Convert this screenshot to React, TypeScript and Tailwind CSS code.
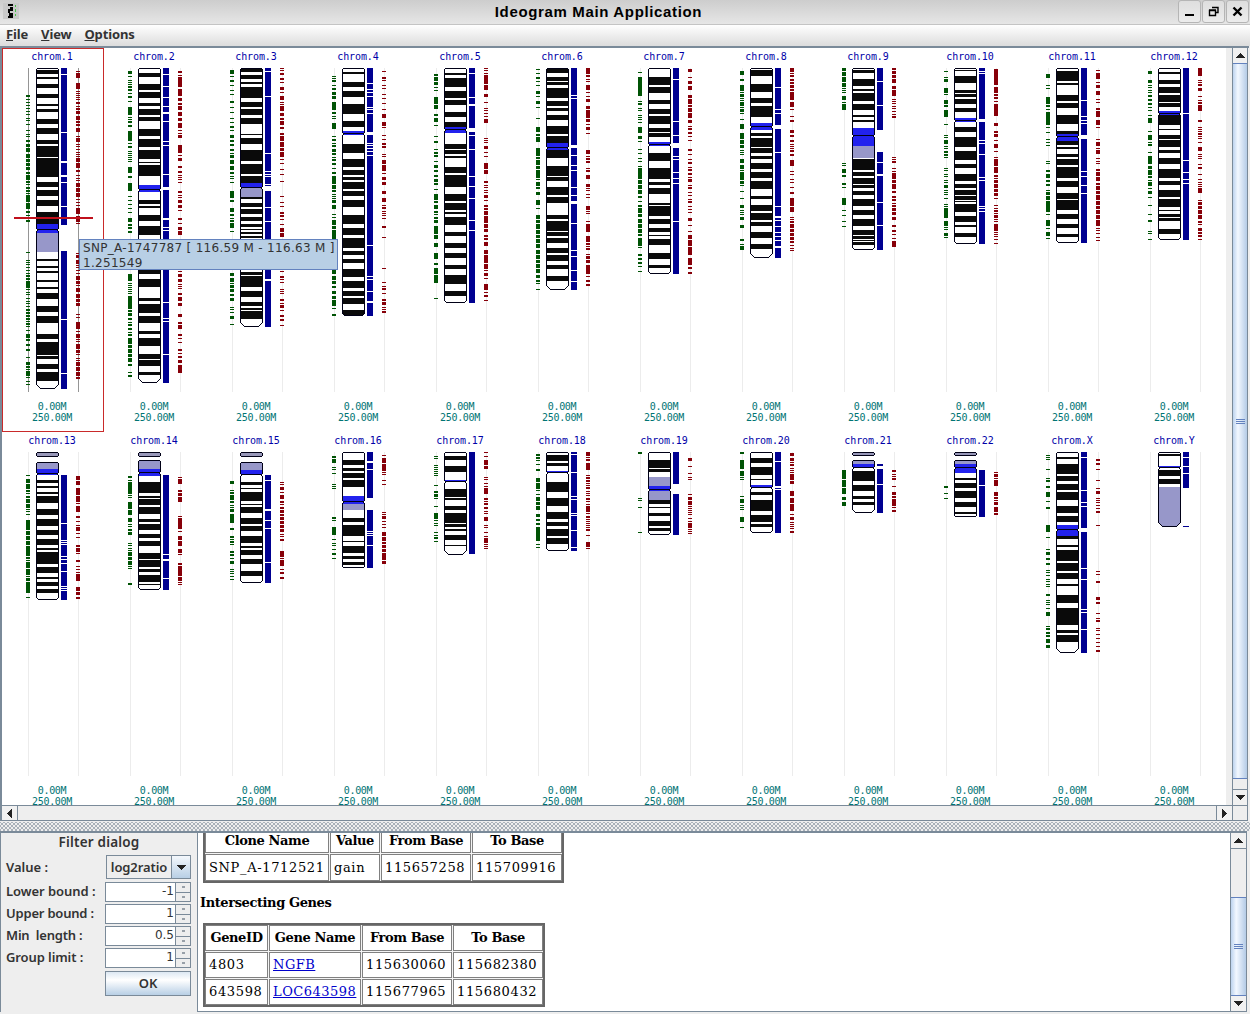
import React from "react";

type Shade = "grey" | "blue";
interface Chromosome {
  name: string;
  end: number;
  start?: number;
  cap?: number;
  waist?: number;
  round?: number;
  bands: string;
  shaded?: [Shade, number, number][];
  strip: string;
  green: string;
  red: string;
}

const chromosomes: Chromosome[] = [
  {
    name: "1", end: 321, waist: 161, round: 4,
    bands: "2-6 9-11 16-20 26-30 36-38 41-44 51-56 60-66 72-76 78-89 90-109 114-119 122-128 132-138 144-156 191-193 198-200 203-205 212-214 219-221 225-231 238-244 248-255 266-271 274-287 288-291 296-301 304-313",
    shaded: [["blue", 156, 165], ["grey", 165, 184]],
    strip: "0-6 7-64 65-93 95-107 109-114 115-138 139-157 183-251 252-305 306-321",
    green: "27-29 31 34 37 40 43 46 50 52 56 62 66 68 72-74 76-79 80-84 86-90 91-94 95-98 99-102 104-106 107-112 113-115 116 119-121 122-124 125 127-134 135-141 143-145 147 152-154 184 192 194 196 199 202 205 207-209 210-212 213-220 221 224 226 230 233 235 238 241-243 244-246 247-249 250-252 253 255-257 258 262 266-270 271-273 276-278 281-283 289 294-297 298-300 301 303-308 309 313 316",
    red: "3 5-10 15-21 23 25 27 29 31 34-36 38 40-42 43-46 48-52 53-55 56-58 60-64 68 70-74 76 78 81 84 86 88 90-94 95-100 102-104 107 110 112 115-119 120-124 125-129 131 134 137 140-146 148-154 155 185 187-190 192-196 197 199 202 205 208-212 213-216 217 220-224 226-230 231-234 235-238 246 249 254-261 263 266-270 271 273 276-281 282-285 286 290 292 294-298 299-303 304-308 309-311",
  },
  {
    name: "2", end: 315, waist: 121, round: 4,
    bands: "5-9 16-22 24-30 35-38 41-47 49-53 61-68 71-79 82-91 94-95 97-108 132-136 138-140 147-153 158-167 202-206 211-219 230-233 236-245 248-255 263-266 270-278 286-291 292-298 304-307",
    shaded: [["blue", 117, 124]],
    strip: "0-6 7-18 19-29 30-38 39-44 46-53 54-73 74-77 78-106 107-119 122-150 152-159 160-162 163-234 235-250 251-253 254-286 287-315",
    green: "3-6 8 12 14 16 18-20 21-23 25 28-30 33 39-47 49 51 53-55 57-59 63-73 75 78-80 83 85 87 89 91 93 99-105 108-110 115-123 128 132 136 140 144 150-154 156-158 159-161 163-165 206-213 215 217 219 221 223 225 228-241 242-244 245-248 250-252 254 256-258 260-262 264 266-268 270-276 277-280 281-285 286-289 290-294 296-298 304 307-309",
    red: "3-5 7 9-19 21-28 30-33 35-37 38-42 44-48 50-53 55-60 62 65 67-70 77-85 87 90-93 98-100 103-105 107 109 111 114 123-125 127 129 132-135 137-140 142 150-152 155 159-162 163-167 203 206-209 211-214 216 218 220 225-227 229-233 235-238 246-249 254-256 257-261 266-268 270 274 281-283 285 288-290 292-295 297-305",
  },
  {
    name: "3", end: 259, waist: 119, round: 4,
    bands: "0-4 7-11 14-16 19-30 34-39 41-47 50-56 66-67 70-76 82-93 96-106 108-115 129-131 135-139 141-146 149-153 156-159 161-162 164-166 168-170 204-207 208-219 223-229 234-238 240-242 243-251",
    shaded: [["blue", 115, 119], ["grey", 119, 129]],
    strip: "0-3 4-28 29-85 86-103 104-106 107-108 109-116 117-118 123-139 140-153 154-211 213-259",
    green: "2-6 8 12-14 17 22 26 33-35 39 44 50 54 58-60 62 67-70 72-74 76-78 81-83 85 87-90 92-96 98-102 104-106 108 110 114 123-130 132-134 140-144 146-148 150 152-154 155-160 163 205-208 210-214 215 217-220 221-224 226-228 230-233 239 241 244 248-251 256",
    red: "0 2 5-7 10-12 14 19-22 24 28-32 34 36 38-43 45-48 50-52 53-57 59-61 65-67 68-73 74-79 80-83 84-89 91 95 101 106 113 128 134 138 144-146 147-149 151 156 160-164 165-169 203 208-210 211 214 221 223 225 231-233 235 237-240 242 247-249 251-253 257",
  },
  {
    name: "4", end: 248, waist: 65, round: 2,
    bands: "4-6 14-19 23-29 36-46 53-59 76-85 91-99 102-107 109-112 114-121 123-128 132-139 147-156 160-167 170-180 183-187 191-195 201-209 213-220 223-228 230-236 242-248",
    shaded: [["blue", 63, 67]],
    strip: "0-15 16-21 22-24 25-28 29-39 40-41 42-45 46-64 67-75 76-77 78-80 81-83 84-87 88-177 178-208 209-211 212-223 224-233 235-248",
    green: "8 10 12-14 17 20-22 24-27 28-31 34-42 44-46 48 50 55-61 68 71-73 75 77-79 81-84 85-87 89 91-93 95-97 100 104-106 108-116 117-121 122-124 126 128 130 132-135 137-141 146 149 152-157 158-161 162-171 202-206 208-212 213-216 218-220 223-226 228-231 232-238 240 246-248",
    red: "3 9-11 12 17 20 26 30 35 41 46-50 54-58 59 67 71 75-77 78-80 86 88 92-96 97-103 105 109-112 114-117 123-126 130-134 137 139-141 143 145 147 150 158-160 169 200 214 218 220-222 225 231-233 234-237 239 241 243-245",
  },
  {
    name: "5", end: 235, waist: 61, round: 2,
    bands: "5-7 10-19 23-30 32-37 44-49 54-59 76-81 82-86 88-90 99-105 107-119 126-133 135-142 144-146 149-157 164-168 175-180 185-190 197-201 207-216 223-228",
    shaded: [["blue", 59, 65]],
    strip: "0-5 6-29 30-36 38-60 64-67 68-81 82-108 109-118 119-130 131-152 153-162 163-235",
    green: "6-8 9-13 14-17 19 22 29-36 37-41 46-48 50-54 57 68 73-75 81 84-86 87-89 93 97-100 102-104 107-109 111-114 115-117 121 126-132 133-135 137-141 143-145 146 149-151 152-155 158-166 167-171 175-179 185-191 195-197 200-206 207-215 230",
    red: "0 2 5 7-16 17-22 26-29 34 40 42 45 48 51-55 70 72 74 78-81 84 88 95-101 102-106 113-115 117 119 122 124 127-130 132 137-139 140-142 143-147 148-155 156-160 161-164 167-169 170-172 174-178 182-186 187-195 196-201 202 205-208 210 216-222 224 227-229 232",
  },
  {
    name: "6", end: 222, waist: 79, round: 4,
    bands: "1-5 9-13 14-17 20-30 33-38 40-43 47-52 58-66 68-75 82-90 98-108 109-113 119-127 129-135 147-151 153-163 164-168 170-175 180-185 187-193 197-201 208-213",
    shaded: [["blue", 75, 82]],
    strip: "0-27 28-30 31-77 80-87 88-97 98-102 103-119 120-127 128-133 136-155 156-182 183-188 189-202 203-213 214-222",
    green: "1 5 9-11 13 17 23-26 28 33-36 39 50 59-64 66-68 69-74 80-88 89-91 92-97 98-101 102-110 111 114-118 119-121 124-127 132-137 140 147-151 152-155 156-161 162-166 167-170 171-175 176-180 182-186 187-191 192-195 196-200 201-205 207-210 212-214 215 221",
    red: "0-6 7-9 11 13 17-22 24 28 31-34 38-41 42-50 51-54 56 59-62 65 82-86 88 90-92 93-95 100 102-104 107-111 116-119 120 122 126 129 138-142 143 145 153 156-164 168-174 175-177 178 180-182 186 188-191 192-195 197 198-206 208 212-214 216-218",
  },
  {
    name: "7", end: 206, waist: 76, round: 2,
    bands: "9-17 19-25 32-36 41-46 48-56 60-64 65-69 85-93 100-111 114-117 120-126 135-137 138-148 151-156 160-164 167-168 171-177 185-191 197-200",
    shaded: [["blue", 74, 78]],
    strip: "0-11 12-53 54-67 68-75 80-88 89-91 92-104 105-110 111-115 116-153 154-206",
    green: "4 9-28 33 35-37 40 42 47 49 51 54 59-65 68-71 73 81 85 90 93 98 100-111 112-116 117-121 122-126 128-130 133 137-139 140-145 146-149 151-155 156-160 161-165 166-168 170-178 179 186-188 190-192 194-196 198 203",
    red: "1-4 9 13-16 18-22 27-30 31-36 37-39 40-44 45-50 52-55 58 60-62 64-66 68 72 81-83 86 91 94-96 99 101-103 105-107 109 111-114 117 119-121 124 127 131 133-135 138 141 144 150-153 157 163 167-171 172-178 179-187 190-197 199-201 204-206",
  },
  {
    name: "8", end: 190, waist: 58, round: 4,
    bands: "2-8 16-24 30-35 38-49 65-68 70-79 80-85 88-91 95-101 104-110 113-121 128-131 137-143 145-152 154-158 164-170 176-181",
    shaded: [["blue", 55, 62]],
    strip: "0-19 20-41 42-45 46-57 61-84 85-138 139-148 150-152 153-158 159-164 165-168 169-172 173-178 180-190",
    green: "3-7 11-13 17-23 24 26-28 28 30 32 34-38 39 41-44 45 51 56-61 65-71 72-76 77-80 82 84 86 91-95 97-101 102 104-112 113-116 117 123 130 137-140 142 144 146 149-152 157-160 171-173 176 178-182",
    red: "0-4 5 7-9 11-13 14-16 17-20 21-23 24-32 34-39 41 48 52-54 62-65 67-69 72-74 76 78 80 82-84 86-88 92-98 103 106 111 114 119 124-126 130-138 139-144 149 151 153-155 156-160 161-164 165-168 169-172 173-175 177 180 182",
  },
  {
    name: "9", end: 182, waist: 67, round: 2,
    bands: "2-5 11-18 21-23 25-33 36-42 47-49 52-54 91-102 104-108 110-116 117-120 123-127 131-138 142-147 151-158 162-167 168-171 172-173 174-177",
    shaded: [["blue", 60, 78], ["grey", 78, 90]],
    strip: "0-13 14-37 38-62 84-94 95-106 108-134 135-157 158-182",
    green: "0-3 4-8 9-14 15-19 20 22 24 28-32 34 36-42 95 97 101-105 107-109 115-117 119 130-137 142 147 153 158",
    red: "0-2 3-6 7-10 11-15 18-21 22-28 31 33 35 38 40 43 46 48-50 89 91 93-95 100 103 105-111 112-115 116-121 123-125 128-130 131-133 135 137-139 140-143 144-147 149-152 157-159 162-164 166 170 173-179",
  },
  {
    name: "10", end: 176, waist: 52, round: 2,
    bands: "2-3 8-15 22-25 26-29 31-36 40-44 59-64 69-79 83-92 96-100 106-113 116-120 122-127 128-132 133-134 136-144 148-154 157-159 165-169",
    shaded: [["blue", 50, 54]],
    strip: "0-3 4-5 6-51 54-72 73-75 76-86 87-109 110-112 113-138 139-140 141-143 144-176",
    green: "3 9 11-14 20-25 26 32-36 37-39 42-49 56 67 69 72-76 78 80 83-85 86-88 89 100 102 106 108 112 114 117-120 122 124 126 130 136 138 140-150 153-158 159 161 165-168 169",
    red: "1-17 19-25 26-28 29-31 33 36-48 55-58 63-65 66-69 72 76-80 83 89 91-98 99-105 107-109 110 112-115 116-120 121-124 125-128 130 137 140 142-144 145 147-150 151 153 156-163 164 166 168 171 175",
  },
  {
    name: "11", end: 175, waist: 68, round: 2,
    bands: "3-13 15-17 27-33 35-40 47-56 63-66 73-77 79-81 86-89 91-97 99-110 113-119 125-131 132-142 146-151 156-160 166-169",
    shaded: [["blue", 66, 73]],
    strip: "0-32 33-48 49-52 53-55 56-67 71-103 104-108 109-117 118-125 126-175",
    green: "6-10 17 20 29-36 37-39 41 44-57 59 64 71 74 77 93 95 102-104 106-110 112-114 116-118 122 124-127 128-132 133-135 135-144 146 152-158 160 164-168 170",
    red: "2 5-11 14 17-20 23-27 31 34 40-42 43-49 52-57 59 71 74-78 80 82-86 90 93 95 101-103 104-108 109-113 115-117 118-122 123-126 127-132 133-137 138-141 142-146 147-151 152-158 160 162 165 169 172",
  },
  {
    name: "12", end: 172, waist: 45, round: 2,
    bands: "4-6 12-16 19-25 27-34 35-39 47-57 61-62 67-71 72-79 82-85 90-96 101-110 113-117 122-129 131-139 142-143 146-149 150-153 161-166",
    shaded: [["blue", 43, 47]],
    strip: "0-45 46-92 93-104 105-111 112-115 116-172",
    green: "3-6 12-15 17 19 22 24 27-29 31-33 35-37 39 42 47 50-55 63 67 68-72 74 76-78 84 88-96 98-101 102-107 108-110 112 114-118 120 123-126 129 137 146 152-154 163 165 171",
    red: "0-8 12 14 16-18 20-23 28 32 34-36 37-43 52-54 59 61 63 65-67 68 70 74 79-83 86 88 90 96 99-101 106 111 114 116 118 120-125 132 134-137 138-141 142-146 147-151 153-155 156 160-163 164-166 167-169 171",
  },
  {
    name: "13", start: 10, cap: 5, end: 148, waist: 21, round: 2,
    bands: "28-31 34-36 40-42 44-51 57-63 67-74 78-83 87-93 96-98 100-112 115-121 125-127 130-134 137-141",
    shaded: [["grey", 10, 17], ["blue", 17, 23]],
    strip: "23-71 72-88 89-90 91-92 93-104 105-107 108-111 112-119 120-134 135-136 137-138 139-148",
    green: "23 27-31 32-37 38-40 41 44-46 47-51 52-56 57 59 62 68-78 79-83 84-88 89-93 94-104 105-107 108 110-116 117-123 124 126 127-129 130-141 145",
    red: "24-28 29-33 36-43 44-50 51 54-60 64-66 69 73 75-79 81 85 93-95 96-100 101 108-110 114 117 120 122-129 135-139 140-143 145-147",
  },
  {
    name: "14", start: 8, cap: 5, end: 138, waist: 20, round: 2,
    bands: "30-41 44-46 47-53 55-62 67-70 72-78 82-86 89-94 101-107 108-115 117-120 123-130 132-133",
    shaded: [["grey", 8, 17], ["blue", 17, 24]],
    strip: "23-102 103-107 109-126 127-138",
    green: "24-26 28 30-42 43 45 50-57 58-63 66-70 72 74 77-79 80-83 91 93 96 98 100-104 105-108 109-113 114 116 131-133",
    red: "25 27-32 38-40 41-44 45-50 64 66-77 79 84-88 89-94 97-101 102 111-113 114-124 125-129 130 132",
  },
  {
    name: "15", start: 10, cap: 5, end: 131, waist: 22, round: 2,
    bands: "30-33 36-37 40-49 52-53 55-61 66-72 74-79 84-91 94-96 98-103 107-112 119-124",
    shaded: [["grey", 10, 18], ["blue", 18, 22]],
    strip: "23-28 29-57 59-68 69-76 77-110 111-131",
    green: "29-32 38 40-42 43-48 49-51 53 55 57-60 62-71 76-78 84-86 87 89-91 92 99-101 102-104 106 109-112 117 119 121 124 127",
    red: "30 32 35-38 40 43-47 49-51 52 55-57 58-61 62-64 65-68 69-72 73-76 77-80 82 84 87-89 99-105 106 108-114 117 120-122 125-127",
  },
  {
    name: "16", end: 116, waist: 49, round: 1,
    bands: "8-13 16-19 21-26 28-35 66-70 73-84 89-90 94-101 104-107 110-113",
    shaded: [["blue", 44, 52], ["grey", 52, 58]],
    strip: "0-9 11-17 18-46 58-79 80-81 82-83 84-93 94-116",
    green: "4-6 7-11 15 17 21 32 34 36 65-67 68 75-83 87 91 93 97 101-103 106",
    red: "3 6-11 12-19 20 22 28 32 60 62 64-67 69 72 75 80-84 85-89 90-92 93-96 97-100 101-108 109-112",
  },
  {
    name: "17", end: 103, waist: 29, round: 4,
    bands: "4-8 14-20 37-45 46-48 54-58 61-71 72-75 77-79 83-88 93-94",
    shaded: [["blue", 28, 30]],
    strip: "0-102",
    green: "4 6 13 15 17 19 21 23 33 39-41 42-45 46 54 61-67 68 71 73 80 83 85-87 89",
    red: "0 4 8-13 14-17 25 27 31 34 36-42 46-48 49 51-53 55-57 59 61 65-69 73 75 80 84 86-91 92 94 96",
  },
  {
    name: "18", end: 99, waist: 20, round: 2,
    bands: "3-9 11-14 30-40 46-54 60-67 70-74 77-84 86-92",
    shaded: [["blue", 19, 21]],
    strip: "0-2 3-20 21-44 45-47 48-61 62-63 64-78 79-95 96-99",
    green: "2-4 5-7 8 12 17-19 26-30 31-37 38 42 45-49 50-53 54-58 62-65 67-69 71-73 75-89 92 95",
    red: "0-4 5 7-9 11-18 23 25-27 28-30 31 33 35-37 39 41 43 46-48 49 52 54-60 61 64-66 67 69 71 73 75 77-79 83 90-95 96",
  },
  {
    name: "19", end: 83, waist: 37, round: 2,
    bands: "8-16 17-20 48-52 55-56 61-64 69-74 76-79",
    shaded: [["grey", 25, 34], ["blue", 34, 39], ["grey", 39, 48]],
    strip: "0-32 42-83",
    green: "0-2 46 48 55 80",
    red: "6-9 14 21 25 27 42 45-48 49-53 54 56 58 60 62 66 69 71-76 77 79 81",
  },
  {
    name: "20", end: 81, waist: 35, round: 2,
    bands: "6-11 15-23 27-28 40-43 48-59 63-70 72-75",
    shaded: [["blue", 33, 35]],
    strip: "0-9 10-34 36-37 38-81",
    green: "0-2 8-17 19-24 25 27 44 47-51 53 55 57 65-70 75",
    red: "1-4 6-9 10 12-14 16 18 20 22-28 29-32 39-44 46-51 52-59 62 65-68 70 72 74 76 79-81",
  },
  {
    name: "21", start: 8, cap: 4, end: 61, waist: 15, round: 3,
    bands: "19-29 33-39 44-47 50-53",
    shaded: [["grey", 8, 12], ["blue", 12, 16]],
    strip: "12-14 17-32 33-61",
    green: "18-27 28-35 36-42 45-48 50-54",
    red: "18-20 22 24 26-28 34 40-43 44-46 47-54 55 58-60",
  },
  {
    name: "22", start: 8, cap: 4, end: 65, waist: 15, round: 1,
    bands: "26-28 31-36 39-46 50-55 60-62",
    shaded: [["grey", 8, 12], ["blue", 12, 21]],
    strip: "18-33 34-65",
    green: "34-36 41 46",
    red: "20 22-25 26 28-34 40-44 45-47 48 50-53 55-60 61-63",
  },
  {
    name: "X", end: 201, waist: 77, round: 4,
    bands: "5-7 12-22 24-29 32-38 40-48 54-61 64-70 84-87 93-95 98-109 111-119 121-127 132-134 143-151 156-173 178-181 183-190",
    shaded: [["blue", 73, 84]],
    strip: "0-5 6-38 39-50 51-54 55-76 80-116 117-127 128-157 158-160 161-177 178-201",
    green: "3 5 7 17 26 28-30 34-36 40-45 49 55-57 73-80 85 97 100-103 106-108 111-113 118 120 123 127 129 132 134 142-144 148 150 152 156 160-164 174 176-178 180-182 183-185 187-191 193-196",
    red: "7-9 11-13 17 28 36 39-42 46 48 50 53 56 59-61 73 119 122 129-131 145-148 150-152 161 166 168-170 176 178 182 186 190 194 198-200",
  },
  {
    name: "Y", end: 75, waist: 15, round: 4,
    bands: "2-4 18-24 27-32",
    shaded: [["blue", 14, 15], ["grey", 35, 75]],
    strip: "0-5 6-14 15-21 22-36 74-75",
    green: "",
    red: "",
  },
];

const parse = (s: string): [number, number][] =>
  s
    .split(" ")
    .filter(Boolean)
    .map((part) => {
      const [a, b] = part.split("-").map(Number);
      return [a, b ?? a + 1];
    });

const bars = (s: string, x: number, width: number) =>
  parse(s)
    .map(([a, b]) => `M${x} ${a}h${width}v${b - a}h${-width}z`)
    .join("");

/** Outline of one arm with chamfered corners. */
const arm = (y0: number, y1: number, top: number, bottom: number) =>
  `M${34.5 + top} ${y0}H${56.5 - top}L56.5 ${y0 + top}V${y1 - bottom}L${56.5 - bottom} ${y1}H${34.5 + bottom}L34.5 ${y1 - bottom}V${y0 + top}Z`;

function Ideogram({ c, selected }: { c: Chromosome; selected: boolean }) {
  const top = (c.start ?? 0) + 0.5;
  const end = c.end - 0.5;
  const round = c.round ?? 2;
  const outline = c.waist
    ? arm(top, c.waist + 0.5, 1, 1) + arm(c.waist + 0.5, end, 2, round)
    : arm(top, end, 1, round);
  const clip = `arms-${c.name}`;
  return (
    <svg className="block shrink-0" width="100" height="326" viewBox="0 0 100 326" shapeRendering="crispEdges">
      <path d="M26.5 0V324M76.5 0V324" stroke={selected ? "#959595" : "#ececec"} />
      <path d={bars(c.green, 24, 4)} fill="#005305" />
      <path d={bars(c.red, 74, 4)} fill="#870009" />
      <path d={bars(c.strip, 59, 6)} fill="#000091" />
      <clipPath id={clip}>
        <path d={outline} />
      </clipPath>
      <path d={outline} fill="#fff" />
      <g clipPath={`url(#${clip})`}>
        <path d={bars(c.bands, 34, 23)} fill="#0a0a0a" />
        {c.shaded?.map(([shade, a, b]) => (
          <rect key={a} x="34" y={a} width="23" height={b - a} fill={shade === "blue" ? "#2222ee" : "#9797c9"} />
        ))}
      </g>
      <path d={outline} fill="none" stroke="#000016" />
      {c.cap && <path d={arm(0.5, c.cap - 0.5, 1, 1)} fill="#9797b8" stroke="#000016" />}
      {selected && <path d="M12 149h79v2h-79z" fill="#c0101c" />}
    </svg>
  );
}

function Cell({ c, selected }: { c: Chromosome; selected: boolean }) {
  return (
    <div
      className={`flex h-[384px] w-[102px] flex-col font-['DejaVu_Sans_Mono',monospace] text-[10px] leading-[11px] ${
        selected ? "border border-[#c92a2a]" : "border border-transparent"
      }`}
    >
      <div className="h-[19px] pt-[2px] pr-[2px] text-center tracking-[-0.1px] text-[#0000a8]">chrom.{c.name}</div>
      <div className="-ml-px">
        <Ideogram c={c} selected={selected} />
      </div>
      <div className="pt-[7px] pr-[2px] text-center tracking-[-0.3px] text-[#007474]">
        <div>0.00M</div>
        <div>250.00M</div>
      </div>
    </div>
  );
}

type Dir = "up" | "down" | "left" | "right";
const arrows: Record<Dir, string> = {
  up: "M4 0h1v1h1v1h1v1h1v1h1v1H0V4h1V3h1V2h1V1h1z",
  down: "M0 0h9v1H8v1H7v1H6v1H5v1H4V4H3V3H2V2H1V1H0z",
  left: "M4 0h1v9H4V8H3V7H2V6H1V5H0V4h1V3h1V2h1V1h1z",
  right: "M0 0h1v1h1v1h1v1h1v1h1v1H4v1H3v1H2v1H1v1H0z",
};

function Arrow({ dir }: { dir: Dir }) {
  const flat = dir === "up" || dir === "down";
  return (
    <svg width={flat ? 9 : 5} height={flat ? 5 : 9} shapeRendering="crispEdges">
      <path d={arrows[dir]} fill="#222" />
    </svg>
  );
}

function ScrollButton({ dir, className }: { dir: Dir; className: string }) {
  return (
    <div className={`flex shrink-0 items-center justify-center border-[#7a8a99] bg-[#f1f1f1] ${className}`}>
      <Arrow dir={dir} />
    </div>
  );
}

function Thumb({ className }: { className: string }) {
  return (
    <div
      className={`flex shrink-0 flex-col items-center justify-center gap-px border-y border-[#6382bf] bg-linear-to-r from-[#bdd3ee] via-[#f3f8ff] via-35% to-[#b4cbe6] ${className}`}
    >
      <i className="h-px w-[9px] bg-[#6382bf]" />
      <i className="h-px w-[9px] bg-[#6382bf]" />
      <i className="h-px w-[9px] bg-[#6382bf]" />
    </div>
  );
}

function WindowButton({ children }: { children: React.ReactNode }) {
  return (
    <div className="flex h-[23px] w-[23px] items-center justify-center rounded-[3px] border border-[#b5b5b5] bg-linear-to-b from-[#dedede] to-[#ececec]">
      <svg width="21" height="21" fill="none" stroke="#000">
        {children}
      </svg>
    </div>
  );
}

function Spinner({ label, value, labelClass }: { label: string; value: string; labelClass: string }) {
  return (
    <div className="mb-[2px] flex h-5 items-center">
      <div className={`w-[99px] pb-[2px] whitespace-pre ${labelClass}`}>{label}</div>
      <div className="flex h-5 w-[86px] border border-[#7a8a99]">
        <div className="flex-1 bg-white pr-[1px] text-right font-['DejaVu_Sans'] text-[12px] leading-[17px] font-normal text-[#333]">{value}</div>
        <div className="flex w-[15px] flex-col border-l border-[#7a8a99] bg-[#eee]">
          <div className="flex flex-1 items-center justify-center border-b border-[#7a8a99]">
            <i className="h-[2px] w-[3px] bg-[#98a0a8]" />
          </div>
          <div className="flex flex-1 items-center justify-center">
            <i className="h-[2px] w-[3px] bg-[#98a0a8]" />
          </div>
        </div>
      </div>
    </div>
  );
}

function DataTable({ head, rows, widths, heights }: { head: string[]; rows: string[][]; widths: number[]; heights: number[] }) {
  return (
    <div className="flex w-fit flex-col gap-px border-2 border-[#666] bg-[#f4f4f4]">
      {[head, ...rows].map((row, r) => (
        <div key={r} className="flex gap-px" style={{ height: heights[r] }}>
          {row.map((text, i) => (
            <div
              key={i}
              style={{ width: widths[i] }}
              className={`flex shrink-0 items-center border border-[#808080] bg-white whitespace-nowrap ${
                r === 0 ? "justify-center text-[13px] font-bold tracking-[-0.4px]" : "pl-[3px] text-[13px] tracking-[0.65px]"
              }`}
            >
              {text === "NGFB" || text.startsWith("LOC") ? (
                <a className="tracking-[0.5px] text-[#0000cc] underline">{text}</a>
              ) : (
                text
              )}
            </div>
          ))}
        </div>
      ))}
    </div>
  );
}

export default function App() {
  return (
    <div className="flex h-[1014px] w-[1250px] flex-col overflow-hidden bg-[#eee] font-['DejaVu_Sans',sans-serif] text-[#333]">
      <header className="flex h-[25px] shrink-0 items-center justify-between border-b border-[#c4c4c4] bg-linear-to-b from-[#cdcdcd] to-[#e6e6e6] pr-px pl-[3px]">
        <svg className="mb-[3px]" width="16" height="16" shapeRendering="crispEdges">
          <path d="M0 0h16v16H0z" fill="#c9c9c9" />
          <path d="M5 1h5v2H5zM7 4h3v2H7zM5 6h5v2H7v2H5zM6 10h4v3H6zM5 13h5v2H5z" fill="#000" />
          <path d="M12 2h1v2h-1zM12 6h1v3h-1zM12 11h1v2h-1z" fill="#46c246" />
        </svg>
        <h1 className="font-['Liberation_Sans',sans-serif] text-[15px] font-bold tracking-[0.65px] text-black">Ideogram Main Application</h1>
        <div className="mb-[2px] flex gap-px">
          <WindowButton>
            <path d="M6 14h9" strokeWidth="2" />
          </WindowButton>
          <WindowButton>
            <path d="M6.500 9.500h6v5h-6zM6 9h7M9 6.500h6v5h-2" strokeWidth="1.400" />
          </WindowButton>
          <WindowButton>
            <path d="M6.500 6.500l8 8M14.500 6.500l-8 8" strokeWidth="2.400" />
          </WindowButton>
        </div>
      </header>
      <nav className="flex h-[21px] shrink-0 items-center gap-[13px] bg-linear-to-b from-white to-[#dcdcdc] pb-[2px] pl-[6px] font-['Noto_Sans',sans-serif] text-[13px] leading-[19px] font-bold tracking-[-0.15px]">
        <span><u>F</u>ile</span>
        <span><u>V</u>iew</span>
        <span><u>O</u>ptions</span>
      </nav>

      <section className="flex h-[775px] w-[1249px] shrink-0 flex-col border-t-2 border-l-2 border-[#7a8a99]">
        <div className="flex h-[757px] shrink-0">
          <div className="h-[757px] w-[1224px] shrink-0 overflow-hidden bg-white">
            <div className="grid w-[1224px] grid-cols-12">
              {chromosomes.map((c) => (
                <Cell key={c.name} c={c} selected={c.name === "1"} />
              ))}
            </div>
          </div>
          <div className="w-[6px] shrink-0 bg-[#eee]" />
          <div className="flex w-[16px] shrink-0 flex-col border-x border-[#7a8a99] bg-[#eee]">
            <ScrollButton dir="up" className="h-[15px]" />
            <Thumb className="h-[716px]" />
            <div className="flex-1" />
            <ScrollButton dir="down" className="h-[16px] border-t" />
          </div>
        </div>
        <div className="flex h-[16px] w-[1246px] shrink-0 border-y border-r border-[#7a8a99]">
          <ScrollButton dir="left" className="w-[16px] border-r" />
          <div className="flex-1" />
          <ScrollButton dir="right" className="w-[16px] border-l" />
          <div className="w-[15px] border-l border-[#7a8a99]" />
        </div>
      </section>

      <div className="h-[10px] shrink-0 border-t border-[#eee] bg-[radial-gradient(#a3acb5_0.7px,transparent_0.8px),radial-gradient(#a3acb5_0.7px,transparent_0.8px)] bg-size-[4px_4px] bg-position-[0_0,2px_2px]" />

      <section className="flex h-[181px] w-[1247px] shrink-0 border-t-2 border-[#7a8a99]">
        <aside className="flex w-[198px] shrink-0 flex-col border-x border-[#7a8a99] pl-[5px] font-['Noto_Sans',sans-serif] text-[13px] leading-[16px] font-semibold">
          <div className="pt-px pr-[5px] text-center text-[13.5px] tracking-[0.2px]">Filter dialog</div>
          <div className="mt-[5px] mb-[3px] flex h-[24px] items-center">
            <div className="w-[100px]">Value :</div>
            <div className="flex h-[24px] w-[85px] border border-[#7a8a99] bg-[#eee]">
              <div className="flex flex-1 items-center justify-center tracking-[-0.1px]">log2ratio</div>
              <div className="flex w-[19px] items-center justify-center border-l border-[#7a8a99] bg-linear-to-b from-[#f4f8fc] to-[#b8cfe5]">
                <Arrow dir="down" />
              </div>
            </div>
          </div>
          <Spinner label="Lower bound :" value="-1" labelClass="tracking-[-0.05px]" />
          <Spinner label="Upper bound :" value="1" labelClass="tracking-[-0.2px]" />
          <Spinner label="Min  length :" value="0.5" labelClass="tracking-[-0.2px]" />
          <Spinner label="Group limit :" value="1" labelClass="tracking-[-0.1px]" />
          <button className="mt-[1px] ml-[99px] h-[25px] w-[86px] border border-[#7a8a99] bg-linear-to-b from-[#dde8f3] via-white via-35% to-[#b8cfe5] pb-px">OK</button>
        </aside>
        <main className="flex-1 overflow-hidden border-b border-[#7a8a99] bg-white pl-[5px] font-['DejaVu_Serif',serif] text-black">
          <div className="-mt-[6px]">
            <DataTable
              head={["Clone Name", "Value", "From Base", "To Base"]}
              rows={[["SNP_A-1712521", "gain", "115657258", "115709916"]]}
              widths={[124, 50, 90, 90]}
              heights={[24, 27]}
            />
          </div>
          <div className="mt-[11px] mb-[11px] -ml-[3px] text-[13px] leading-[18px] font-bold tracking-[-0.4px]">Intersecting Genes</div>
          <DataTable
            head={["GeneID", "Gene Name", "From Base", "To Base"]}
            rows={[
              ["4803", "NGFB", "115630060", "115682380"],
              ["643598", "LOC643598", "115677965", "115680432"],
            ]}
            widths={[63, 92, 90, 90]}
            heights={[26, 26, 26]}
          />
        </main>
        <div className="flex w-[17px] shrink-0 flex-col border border-t-0 border-[#7a8a99] bg-[#eee]">
          <ScrollButton dir="up" className="h-[16px] border-b" />
          <div className="h-[48px]" />
          <Thumb className="h-[99px]" />
          <ScrollButton dir="down" className="flex-1" />
        </div>
      </section>

      <div className="absolute top-[239px] left-[79px] h-[31px] w-[259px] border border-[#6382bf] bg-[#b8cfe5] pt-px pl-[3px] text-[12px] leading-[15px] tracking-[0.3px] whitespace-pre">
        <div>SNP_A-1747787 [ 116.59 M - 116.63 M ]</div>
        <div>1.251549</div>
      </div>
    </div>
  );
}
